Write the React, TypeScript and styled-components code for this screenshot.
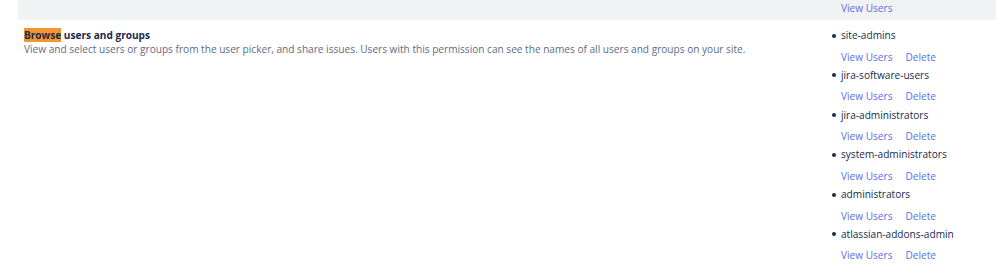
import React from 'react';
import styled, {createGlobalStyle} from 'styled-components';

const GlobalStyle = createGlobalStyle`
  body {
    margin: 0;
    background: #ffffff;
    font-family: "Open Sans", "Noto Sans", sans-serif;
  }
`;

const Table = styled.div`
  margin-left: 18px;
  width: 978px;
`;

const Row = styled.div<{shaded?: boolean}>`
  display: grid;
  grid-template-columns: 804px 1fr;
  height: ${(props) => (props.shaded ? '20px' : 'auto')};
  background: ${(props) => (props.shaded ? '#f1f2f4' : '#ffffff')};
`;

const InfoCell = styled.div`
  padding: 8px 6px 0 6px;
`;

const Title = styled.div`
  font-size: 10.1px;
  font-weight: 700;
  color: #172b4d;
  line-height: 14px;
`;

const Highlight = styled.span`
  background: #f39532;
  color: #172b4d;
`;

const Description = styled.div`
  font-size: 10.1px;
  color: #5e6c84;
  line-height: 14px;
`;

const GroupCell = styled.div`
  padding-left: 10px;
`;

const GroupList = styled.ul`
  margin: 0;
  padding: 8px 0 0 0;
  list-style: none;
`;

const GroupItem = styled.li`
  height: 39.8px;
`;

const GroupName = styled.div`
  display: flex;
  align-items: center;
  gap: 5px;
  font-size: 10.1px;
  color: #172b4d;
  line-height: 15px;
`;

const Bullet = styled.span`
  width: 4px;
  height: 4px;
  border-radius: 50%;
  background: #172b4d;
`;

const Actions = styled.div<{top?: number}>`
  display: flex;
  gap: 13px;
  margin-top: ${(props) => props.top ?? 6.5}px;
  padding-left: 9px;
`;

const ActionLink = styled.a`
  font-size: 10.1px;
  line-height: 15px;
  color: #5b6fe8;
  text-decoration: none;
  cursor: pointer;
`;

const groups = [
  'site-admins',
  'jira-software-users',
  'jira-administrators',
  'system-administrators',
  'administrators',
  'atlassian-addons-admin',
];

export default function App() {
  return (
    <>
      <GlobalStyle />
      <Table>
        <Row shaded>
          <div />
          <GroupCell>
            <Actions top={1}>
              <ActionLink>View Users</ActionLink>
            </Actions>
          </GroupCell>
        </Row>
        <Row>
          <InfoCell>
            <Title>
              <Highlight>Browse</Highlight> users and groups
            </Title>
            <Description>
              View and select users or groups from the user picker, and share issues. Users with this permission can see
              the names of all users and groups on your site.
            </Description>
          </InfoCell>
          <GroupCell>
            <GroupList>
              {groups.map((name) => (
                <GroupItem key={name}>
                  <GroupName>
                    <Bullet />
                    {name}
                  </GroupName>
                  <Actions>
                    <ActionLink>View Users</ActionLink>
                    <ActionLink>Delete</ActionLink>
                  </Actions>
                </GroupItem>
              ))}
            </GroupList>
          </GroupCell>
        </Row>
      </Table>
    </>
  );
}
